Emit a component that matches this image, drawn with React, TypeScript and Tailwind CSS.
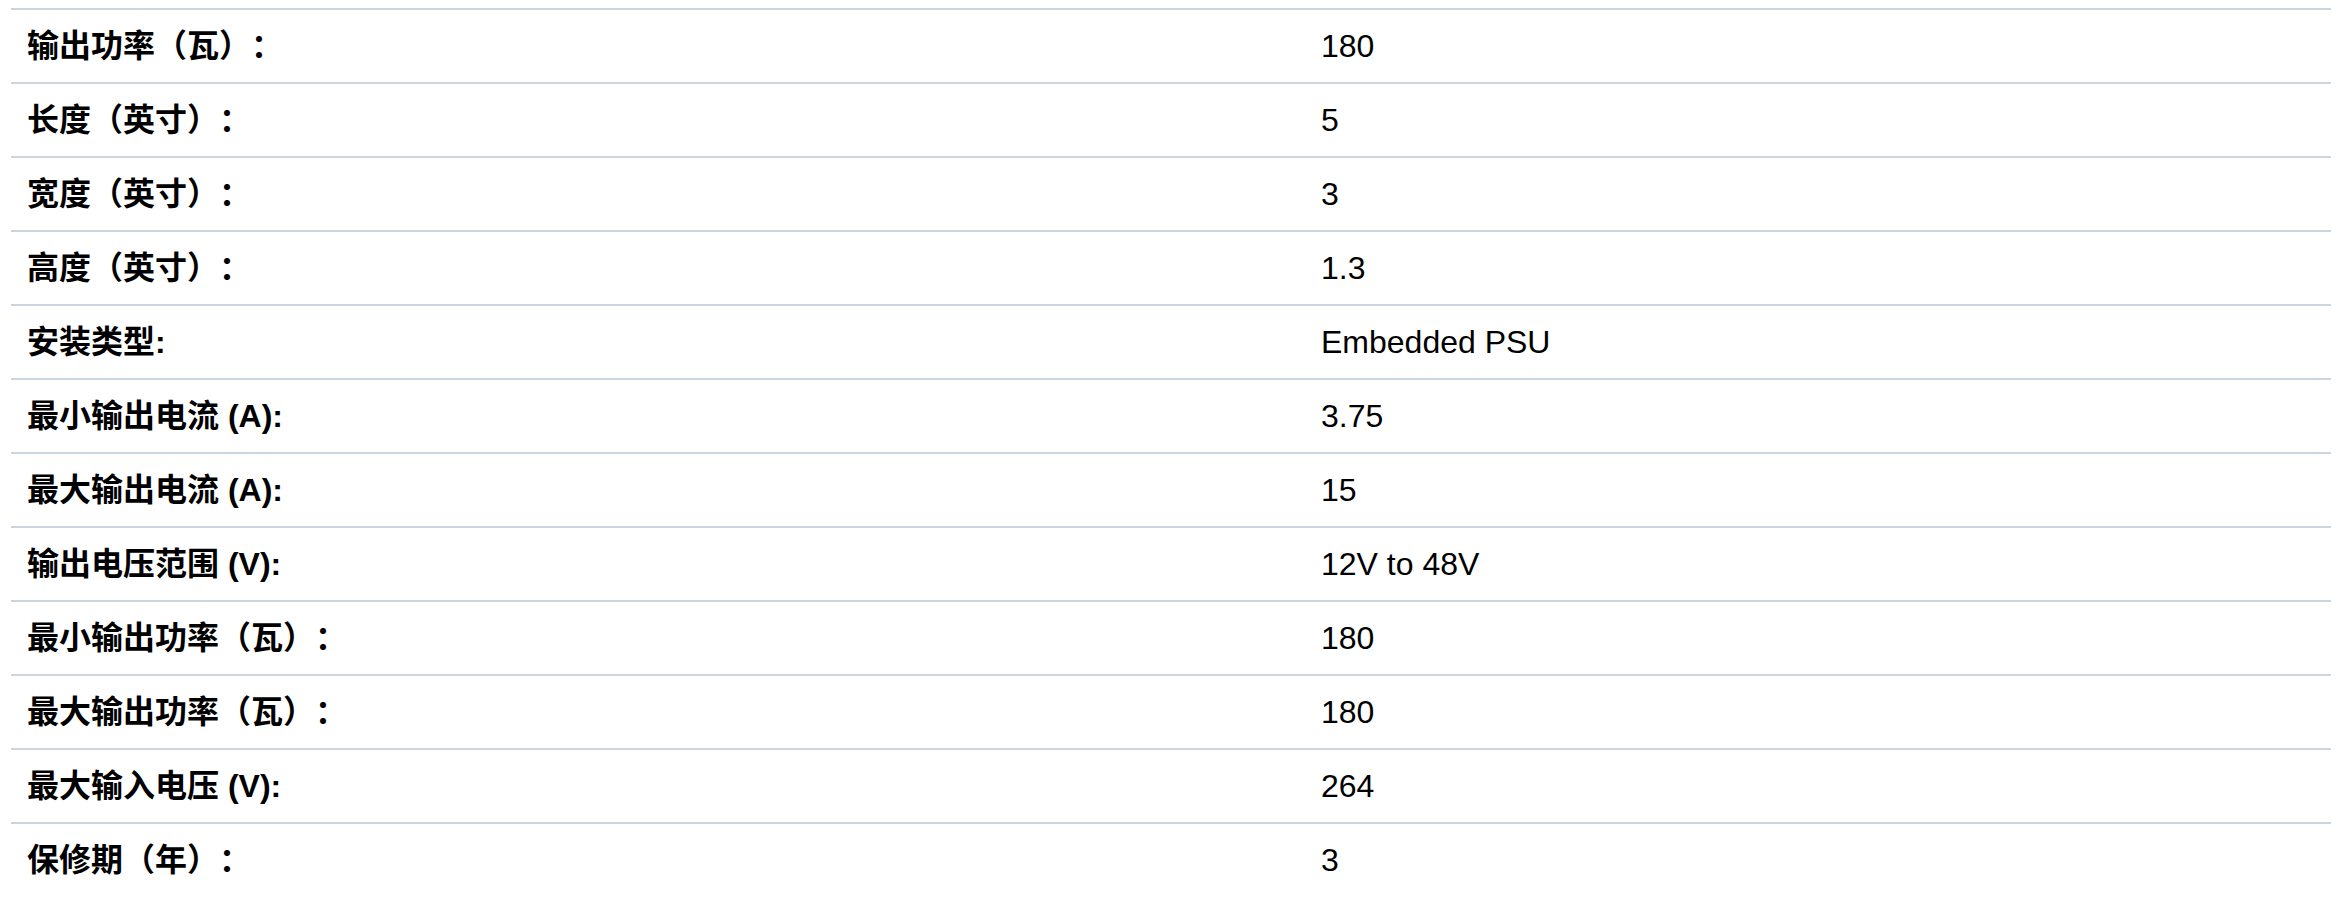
import React from "react";

const rows: [string, string][] = [
  ["输出功率（瓦）：", "180"],
  ["长度（英寸）：", "5"],
  ["宽度（英寸）：", "3"],
  ["高度（英寸）：", "1.3"],
  ["安装类型:", "Embedded PSU"],
  ["最小输出电流 (A):", "3.75"],
  ["最大输出电流 (A):", "15"],
  ["输出电压范围 (V):", "12V to 48V"],
  ["最小输出功率（瓦）：", "180"],
  ["最大输出功率（瓦）：", "180"],
  ["最大输入电压 (V):", "264"],
  ["保修期（年）：", "3"],
];

export default function App() {
  return (
    <div
      className="bg-white min-h-[897px] pt-[8px] pl-[11px] text-black [text-spacing-trim:space-all]"
      style={{ fontFamily: '"Liberation Sans", "Noto Sans CJK SC", Arial, sans-serif' }}
    >
      <div className="w-[2320px]">
        {rows.map(([k, v], i) => (
          <div
            key={i}
            className="grid grid-cols-[1294px_1fr] border-t-2 border-[#cbd5e0] h-[74px]"
          >
            <div className="flex items-center pl-[16px] text-[32px] font-bold leading-none">
              {k}
            </div>
            <div className="flex items-center pl-[16px] text-[32px] leading-none">
              {v}
            </div>
          </div>
        ))}
      </div>
    </div>
  );
}
